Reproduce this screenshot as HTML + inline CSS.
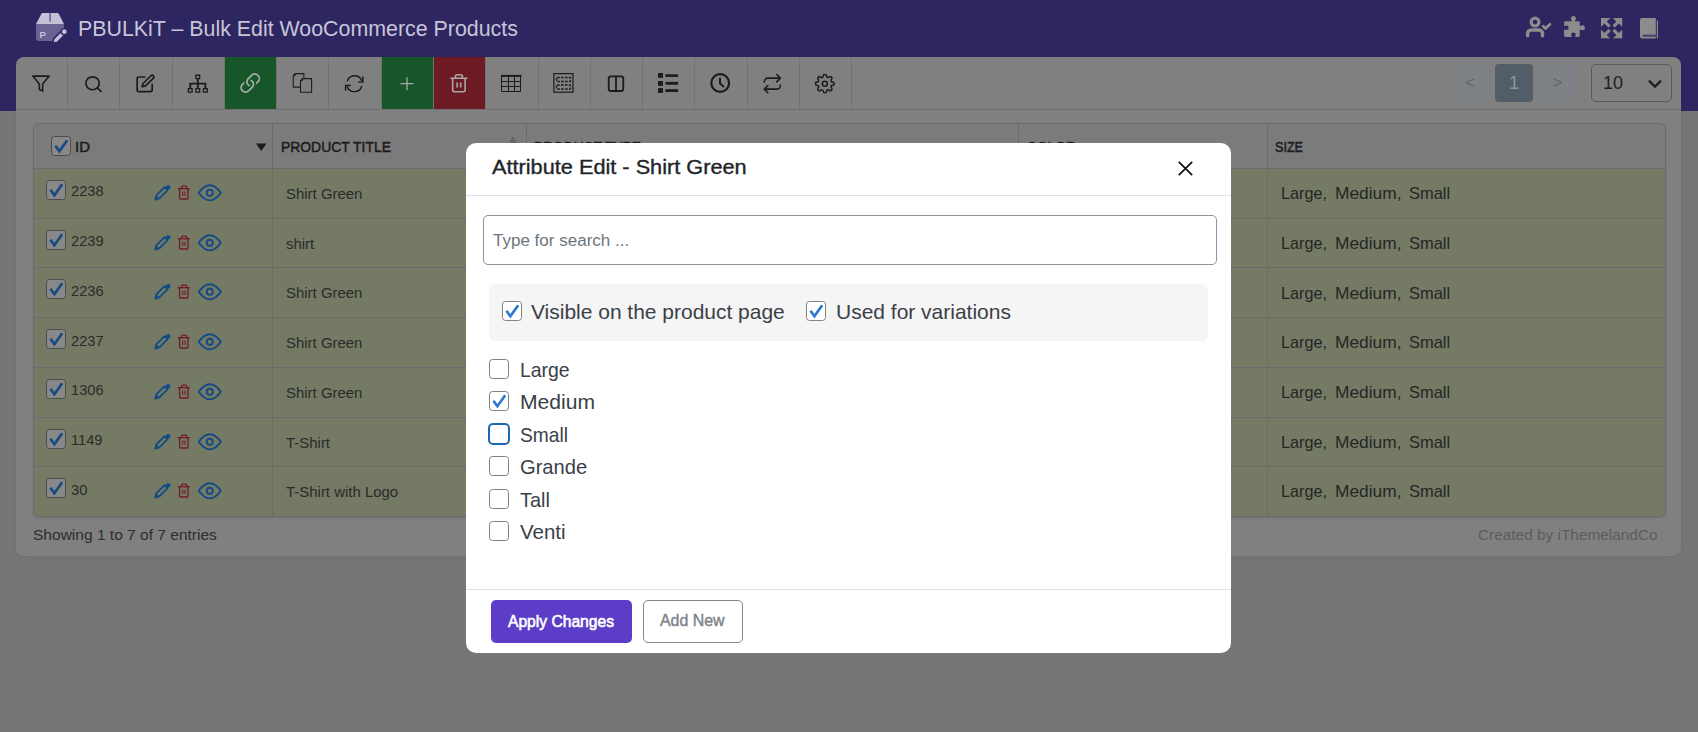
<!DOCTYPE html><html><head><meta charset="utf-8"><style>
*{box-sizing:border-box;margin:0;padding:0}
html,body{width:1698px;height:732px;overflow:hidden}
body{background:#767676;font-family:"Liberation Sans",sans-serif;position:relative}
div,svg,span{position:absolute}
.t{white-space:nowrap}
</style></head><body>
<div style="left:0;top:0;width:1698px;height:110.7px;background:#2d2660"></div>
<svg style="left:0;top:0" width="100" height="60" viewBox="0 0 100 60">
<path d="M36 24 H64 V30.5 L54.5 41 H39 a3 3 0 0 1 -3 -3 Z" fill="#6a6394"/>
<path d="M42.5 12.9 H57.7 a1 1 0 0 1 0.9 0.5 L64 24.1 H36 L41.6 13.4 a1 1 0 0 1 0.9 -0.5 Z" fill="#c4c0d8"/>
<rect x="49.3" y="12.9" width="1.6" height="8.8" fill="#6a6394"/>
<text x="39.6" y="38" font-family="Liberation Sans" font-weight="bold" font-size="9.6" fill="#c4c0d8">P</text>
<path d="M52.6 43.4 L53.8 38.6 L61 31.4 L64.6 35 L57.4 42.2 Z" fill="#c4c0d8" stroke="#2d2660" stroke-width="1.6" stroke-linejoin="round"/>
<circle cx="64.3" cy="31.7" r="3" fill="#c4c0d8" stroke="#2d2660" stroke-width="1.3"/>
</svg>
<div class="t" style="left:77.60px;top:17.73px;font-size:21.22px;line-height:21.22px;color:#c8c5d9;transform:scaleX(1.0072);transform-origin:0 0;">PBULKiT – Bulk Edit WooCommerce Products</div>
<svg style="left:1500px;top:0" width="198" height="60" viewBox="1500 0 198 60">
<circle cx="1535.05" cy="22.1" r="3.9" fill="none" stroke="#8c8c8c" stroke-width="3.2"/>
<path d="M1527.6 35.8 V33.6 a3.6 3.6 0 0 1 3.6 -3.6 H1538.9 a3.6 3.6 0 0 1 3.6 3.6 V35.8" fill="none" stroke="#8c8c8c" stroke-width="3.5" stroke-linecap="round"/>
<path d="M1543.2 26.3 L1545.5 28.6 L1549.9 24.2" fill="none" stroke="#8c8c8c" stroke-width="2.8" stroke-linecap="round" stroke-linejoin="round"/>
<rect x="1564.1" y="21.3" width="15.7" height="15.6" rx="1.3" fill="#8c8c8c"/>
<rect x="1571.9" y="19" width="3" height="3" fill="#8c8c8c"/>
<circle cx="1573.4" cy="18.6" r="2.5" fill="#8c8c8c"/>
<rect x="1579" y="26.2" width="3" height="3" fill="#8c8c8c"/>
<circle cx="1582.4" cy="27.7" r="2.5" fill="#8c8c8c"/>
<circle cx="1566.3" cy="27.7" r="2.3" fill="#2d2660"/>
<rect x="1563.5" y="26.4" width="2.6" height="2.6" fill="#2d2660"/>
<circle cx="1573.4" cy="34.8" r="2.3" fill="#2d2660"/>
<rect x="1572.1" y="35" width="2.6" height="2.6" fill="#2d2660"/>
<rect x="1601" y="18" width="21.2" height="20.3" fill="#8c8c8c"/>
<path d="M1611.6 16.8 L1616.4 21.6 L1611.6 26.4 L1606.8 21.6 Z M1611.6 30.2 L1616.4 35 L1611.6 39.8 L1606.8 35 Z M1599.6 28.2 L1604.4 23.4 L1609.2 28.2 L1604.4 33 Z M1614 28.2 L1618.8 23.4 L1623.6 28.2 L1618.8 33 Z M1611.6 24.4 L1615.4 28.2 L1611.6 32 L1607.8 28.2 Z" fill="#2d2660"/>
<path d="M1642 18 H1655.8 V38.4 H1642.5 a2.5 2.5 0 0 1 -2.5 -2.5 V20 a2 2 0 0 1 2 -2 Z" fill="#8c8c8c"/>
<rect x="1656.8" y="20.5" width="1.2" height="17.9" fill="#8c8c8c"/>
<path d="M1642.6 35.9 H1655.8" stroke="#2d2660" stroke-width="1.3"/>
<path d="M1642.6 34.3 H1655.8" stroke="#6f6a86" stroke-width="1"/>
</svg>
<div style="left:16px;top:57px;width:1665px;height:499px;background:#808080;border-radius:8px;box-shadow:0 1px 5px rgba(0,0,0,0.07)"></div>
<div style="left:16px;top:109px;width:1665px;height:1px;background:#6f6f6f"></div>
<div style="left:67.16px;top:57px;width:1px;height:52px;background:#737373"></div>
<div style="left:119.42px;top:57px;width:1px;height:52px;background:#737373"></div>
<div style="left:171.68px;top:57px;width:1px;height:52px;background:#737373"></div>
<div style="left:223.94px;top:57px;width:1px;height:52px;background:#737373"></div>
<div style="left:224.84px;top:57px;width:51.36px;height:52px;background:#165628"></div>
<div style="left:276.20px;top:57px;width:1px;height:52px;background:#737373"></div>
<div style="left:328.46px;top:57px;width:1px;height:52px;background:#737373"></div>
<div style="left:380.72px;top:57px;width:1px;height:52px;background:#737373"></div>
<div style="left:381.62px;top:57px;width:51.36px;height:52px;background:#165628"></div>
<div style="left:432.98px;top:57px;width:1px;height:52px;background:#737373"></div>
<div style="left:433.88px;top:57px;width:51.36px;height:52px;background:#6e1a24"></div>
<div style="left:485.24px;top:57px;width:1px;height:52px;background:#737373"></div>
<div style="left:537.50px;top:57px;width:1px;height:52px;background:#737373"></div>
<div style="left:589.76px;top:57px;width:1px;height:52px;background:#737373"></div>
<div style="left:642.02px;top:57px;width:1px;height:52px;background:#737373"></div>
<div style="left:694.28px;top:57px;width:1px;height:52px;background:#737373"></div>
<div style="left:746.54px;top:57px;width:1px;height:52px;background:#737373"></div>
<div style="left:798.80px;top:57px;width:1px;height:52px;background:#737373"></div>
<div style="left:851.06px;top:57px;width:1px;height:52px;background:#737373"></div>
<svg style="left:0;top:0" width="900" height="110" viewBox="0 0 900 110"><g transform="translate(31.160 73.600) scale(0.8200 0.8333)"><polygon points="22 3 2 3 10 12.46 10 19 14 21 14 12.46 22 3" fill="none" stroke="#1b1b1b" stroke-width="1.6" vector-effect="non-scaling-stroke" stroke-linejoin='round'/></g><g transform="translate(83.333 74.433) scale(0.8389 0.8056)"><circle cx="11" cy="11" r="8" fill="none" stroke="#1b1b1b" stroke-width="1.7" vector-effect="non-scaling-stroke" /><path d="M21 21 L16.65 16.65" fill="none" stroke="#1b1b1b" stroke-width="1.7" vector-effect="non-scaling-stroke" stroke-linecap='round'/></g><g transform="translate(135.480 73.718) scale(0.8350 0.8151)"><path d="M11 4H4a2 2 0 0 0-2 2v14a2 2 0 0 0 2 2h14a2 2 0 0 0 2-2v-7" fill="none" stroke="#1b1b1b" stroke-width="1.7" vector-effect="non-scaling-stroke" stroke-linecap='round'/><path d="M18.5 2.5a2.121 2.121 0 0 1 3 3L12 15l-4 1 1-4 9.5-9.5z" fill="none" stroke="#1b1b1b" stroke-width="1.7" vector-effect="non-scaling-stroke" stroke-linejoin='round'/></g><g transform="translate(186.460 73.570) scale(0.9450 0.8400)"><rect x="10" y="2" width="4" height="4" fill="none" stroke="#1b1b1b" stroke-width="1.3" vector-effect="non-scaling-stroke" /><rect x="2" y="18" width="4" height="4" fill="none" stroke="#1b1b1b" stroke-width="1.3" vector-effect="non-scaling-stroke" /><rect x="10" y="18" width="4" height="4" fill="none" stroke="#1b1b1b" stroke-width="1.3" vector-effect="non-scaling-stroke" /><rect x="18" y="18" width="4" height="4" fill="none" stroke="#1b1b1b" stroke-width="1.3" vector-effect="non-scaling-stroke" /><path d="M12 6 V18 M4 18 V12 H20 V18" fill="none" stroke="#1b1b1b" stroke-width="1.9" vector-effect="non-scaling-stroke" /></g><g transform="translate(235.760 69.604) scale(1.8051 1.7870)"><path fill="#a8a8a8" d="M4.715 6.542 3.343 7.914a3 3 0 1 0 4.243 4.243l1.828-1.829A3 3 0 0 0 8.586 5.5L8 6.086a1 1 0 0 0-.154.199 2 2 0 0 1 .861 3.337L6.88 11.45a2 2 0 1 1-2.83-2.83l.793-.792a4 4 0 0 1-.128-1.287z"/><path fill="#a8a8a8" d="M6.586 4.672A3 3 0 0 0 7.414 9.5l.775-.776a2 2 0 0 1-.896-3.346L9.12 3.55a2 2 0 1 1 2.83 2.83l-.793.792c.112.42.155.855.128 1.287l1.372-1.372a3 3 0 1 0-4.243-4.243z"/></g><path d="M295.2 73.6 H303.9 V78.6 M295.2 73.6 L293.2 75.6 V87.1 H300.5" fill="none" stroke="#1b1b1b" stroke-width="1.05"/><path d="M293.2 75.6 H295.2 V73.6" fill="#1b1b1b" stroke="#1b1b1b" stroke-width="0.9"/><path d="M302.5 78.6 H311.6 V92.2 H300.5 V80.6 Z" fill="none" stroke="#1b1b1b" stroke-width="1.05"/><path d="M300.5 80.6 H302.5 V78.6" fill="#1b1b1b" stroke="#1b1b1b" stroke-width="0.9"/><path d="M347.2 81.4 A7.7 7.7 0 0 1 361.9 80.9" fill="none" stroke="#1b1b1b" stroke-width="1.45"/><path d="M362.9 76.2 V82.1 H358" fill="none" stroke="#1b1b1b" stroke-width="1.45"/><path d="M361.8 86 A7.7 7.7 0 0 1 347.1 86.4" fill="none" stroke="#1b1b1b" stroke-width="1.45"/><path d="M350.8 85.4 H345.6 V90.8" fill="none" stroke="#1b1b1b" stroke-width="1.45"/><g transform="translate(395.943 72.507) scale(0.9214 0.9286)"><path d="M12 5 V19 M5 12 H19" fill="none" stroke="#a8a8a8" stroke-width="1.3" vector-effect="non-scaling-stroke" /></g><g transform="translate(448.233 73.100) scale(0.8889 0.8500)"><path d="M3 6h18" fill="none" stroke="#a8a8a8" stroke-width="1.6" vector-effect="non-scaling-stroke" stroke-linecap='round'/><path d="M19 6v14c0 1-1 2-2 2H7c-1 0-2-1-2-2V6" fill="none" stroke="#a8a8a8" stroke-width="1.6" vector-effect="non-scaling-stroke" /><path d="M8 6V4c0-1 1-2 2-2h4c1 0 2 1 2 2v2" fill="none" stroke="#a8a8a8" stroke-width="1.6" vector-effect="non-scaling-stroke" /><path d="M10 11v6 M14 11v6" fill="none" stroke="#a8a8a8" stroke-width="1.6" vector-effect="non-scaling-stroke" /></g><path d="M501.5 75 V91.5 H520.5 V75 M508.5 76.5 V91.5 M514.5 76.5 V91.5 M501.5 81.5 H520.5 M501.5 86.5 H520.5" fill="none" stroke="#1b1b1b" stroke-width="1"/><rect x="501" y="74.9" width="20.5" height="2" fill="#1b1b1b"/><rect x="553.9" y="73.6" width="19.1" height="18.6" fill="none" stroke="#1b1b1b" stroke-width="1.2"/><rect x="556.5" y="77.5" width="14" height="4" rx="0.6" fill="none" stroke="#1b1b1b" stroke-width="1.3" stroke-dasharray="2.6 1.3"/><rect x="556.5" y="85" width="14" height="4" rx="0.6" fill="none" stroke="#1b1b1b" stroke-width="1.3" stroke-dasharray="2.6 1.3"/><g transform="translate(608.700 76.400) scale(1.0000 1.0000)"><rect x="0" y="0" width="14.6" height="14.6" rx="2.2" fill="none" stroke="#1b1b1b" stroke-width="1.8" vector-effect="non-scaling-stroke" /><path d="M7.3 0 V14.6" fill="none" stroke="#1b1b1b" stroke-width="1.8" vector-effect="non-scaling-stroke" /></g><rect x="658" y="73" width="5" height="4.8" fill="#1b1b1b"/><rect x="658" y="81" width="5" height="4.9" fill="#1b1b1b"/><rect x="658" y="88.1" width="5" height="4.8" fill="#1b1b1b"/><rect x="665.4" y="74.3" width="12.7" height="2.6" fill="#1b1b1b"/><rect x="665.4" y="81.9" width="12.7" height="2.8" fill="#1b1b1b"/><rect x="665.4" y="89.2" width="12.7" height="2.8" fill="#1b1b1b"/><circle cx="720.2" cy="83" r="8.9" fill="none" stroke="#1b1b1b" stroke-width="2.2"/><path d="M720 77.8 V83.4 L724 87" fill="none" stroke="#1b1b1b" stroke-width="2"/><g transform="translate(761.633 72.670) scale(0.8889 0.9150)"><path d="m17 2 4 4-4 4" fill="none" stroke="#1b1b1b" stroke-width="1.6" vector-effect="non-scaling-stroke" stroke-linecap='round' stroke-linejoin='round'/><path d="M3 11v-1a4 4 0 0 1 4-4h14" fill="none" stroke="#1b1b1b" stroke-width="1.6" vector-effect="non-scaling-stroke" /><path d="m7 22-4-4 4-4" fill="none" stroke="#1b1b1b" stroke-width="1.6" vector-effect="non-scaling-stroke" stroke-linecap='round' stroke-linejoin='round'/><path d="M21 13v1a4 4 0 0 1-4 4H3" fill="none" stroke="#1b1b1b" stroke-width="1.6" vector-effect="non-scaling-stroke" /></g><g transform="translate(814.595 73.614) scale(0.8545 0.8364)"><circle cx="12" cy="12" r="3" fill="none" stroke="#1b1b1b" stroke-width="1.5" vector-effect="non-scaling-stroke" /><path d="M19.4 15a1.65 1.65 0 0 0 .33 1.82l.06.06a2 2 0 0 1-2.83 2.83l-.06-.06a1.65 1.65 0 0 0-1.82-.33 1.65 1.65 0 0 0-1 1.51V21a2 2 0 0 1-4 0v-.09A1.65 1.65 0 0 0 9 19.4a1.65 1.65 0 0 0-1.82.33l-.06.06a2 2 0 0 1-2.83-2.830l.06-.06a1.65 1.65 0 0 0 .33-1.82 1.65 1.65 0 0 0-1.51-1H3a2 2 0 0 1 0-4h.09A1.65 1.65 0 0 0 4.6 9a1.65 1.65 0 0 0-.33-1.82l-.06-.06a2 2 0 0 1 2.83-2.83l.06.06a1.65 1.65 0 0 0 1.82.33H9a1.65 1.65 0 0 0 1-1.51V3a2 2 0 0 1 4 0v.09a1.65 1.65 0 0 0 1 1.51 1.65 1.65 0 0 0 1.82-.33l.06-.06a2 2 0 0 1 2.83 2.83l-.06.06a1.65 1.65 0 0 0-.33 1.82V9a1.65 1.65 0 0 0 1.51 1H21a2 2 0 0 1 0 4h-.09a1.65 1.65 0 0 0-1.51 1z" fill="none" stroke="#1b1b1b" stroke-width="1.5" vector-effect="non-scaling-stroke" /></g></svg>
<div style="left:1451px;top:64px;width:38px;height:38px;background:#7e8185;border-radius:4px"></div>
<div class="t" style="left:1451px;top:72px;width:38px;text-align:center;font-size:17px;line-height:22px;color:#5d6670">&lt;</div>
<div style="left:1495px;top:64px;width:38px;height:38px;background:#535d68;border-radius:4px"></div>
<div class="t" style="left:1495px;top:72px;width:38px;text-align:center;font-size:18px;line-height:22px;color:#8c96a0">1</div>
<div style="left:1539px;top:64px;width:37px;height:38px;background:#7e8185;border-radius:4px"></div>
<div class="t" style="left:1539px;top:72px;width:37px;text-align:center;font-size:17px;line-height:22px;color:#5d6670">&gt;</div>
<div style="left:1591px;top:64px;width:81px;height:38px;border:1px solid #5a5a5a;border-radius:5px"></div>
<div class="t" style="left:1603px;top:72px;font-size:18px;line-height:22px;color:#1e1e1e">10</div>
<svg style="left:1647px;top:78px" width="16" height="11" viewBox="0 0 16 11"><path d="M1.9 2.6 L7.95 8.6 L14 2.6" fill="none" stroke="#1e1e1e" stroke-width="2.3"/></svg>
<div style="left:33px;top:123px;width:1633px;height:394px;background:#747a64;border:1px solid #6b6b6b;border-radius:6px;overflow:hidden;box-shadow:0 1px 2px rgba(0,0,0,0.12)"><div style="left:0;top:0;width:100%;height:45px;background:#7b7b7b;border-bottom:1px solid #6b6b6b"></div></div>
<div style="left:34px;top:217.70px;width:1631px;height:1px;background:#6b6b6b"></div>
<div style="left:34px;top:267.40px;width:1631px;height:1px;background:#6b6b6b"></div>
<div style="left:34px;top:317.10px;width:1631px;height:1px;background:#6b6b6b"></div>
<div style="left:34px;top:366.80px;width:1631px;height:1px;background:#6b6b6b"></div>
<div style="left:34px;top:416.50px;width:1631px;height:1px;background:#6b6b6b"></div>
<div style="left:34px;top:466.20px;width:1631px;height:1px;background:#6b6b6b"></div>
<div style="left:272px;top:124px;width:1px;height:392px;background:#6b6b6b"></div>
<div style="left:526px;top:124px;width:1px;height:392px;background:#6b6b6b"></div>
<div style="left:1018px;top:124px;width:1px;height:392px;background:#6b6b6b"></div>
<div style="left:1267px;top:124px;width:1px;height:392px;background:#6b6b6b"></div>
<div style="left:51px;top:136px;width:20px;height:20px;border:1px solid #4c4c4c;border-radius:3.5px;background:#888889"></div><svg style="left:51px;top:136px" width="20" height="20" viewBox="0 0 20 20"><path d="M4.4 9.8 L8.4 15.2 L16.2 4.2" fill="none" stroke="#184a82" stroke-width="2.7" stroke-linecap="butt" stroke-linejoin="miter"/></svg>
<div class="t" style="left:74.60px;top:138.87px;font-size:15.26px;line-height:15.26px;color:#1b1b1b;transform:scaleX(0.9800);transform-origin:0 0;-webkit-text-stroke:0.5px #1b1b1b">ID</div>
<svg style="left:256px;top:143px" width="11" height="9" viewBox="0 0 11 9"><path d="M0 0.5 H10.5 L5.25 8 Z" fill="#1b1b1b"/></svg>
<div class="t" style="left:281.40px;top:138.87px;font-size:15.26px;line-height:15.26px;color:#1b1b1b;transform:scaleX(0.9113);transform-origin:0 0;-webkit-text-stroke:0.5px #1b1b1b">PRODUCT TITLE</div>
<svg style="left:508px;top:135px" width="10" height="9" viewBox="0 0 10 9"><path d="M0.6 8.5 H9 L4.8 1 Z" fill="#666"/></svg>
<div class="t" style="left:534.00px;top:138.87px;font-size:15.26px;line-height:15.26px;color:#1b1b1b;transform:scaleX(0.9000);transform-origin:0 0;-webkit-text-stroke:0.5px #1b1b1b">PRODUCT TYPE</div>
<div class="t" style="left:1026.70px;top:138.87px;font-size:15.26px;line-height:15.26px;color:#1b1b1b;transform:scaleX(0.9000);transform-origin:0 0;-webkit-text-stroke:0.5px #1b1b1b">COLOR</div>
<div class="t" style="left:1275.40px;top:138.87px;font-size:15.26px;line-height:15.26px;color:#1b1b1b;transform:scaleX(0.8253);transform-origin:0 0;-webkit-text-stroke:0.5px #1b1b1b">SIZE</div>
<div style="left:46px;top:180.0px;width:20px;height:20px;border:1px solid #4c4c4c;border-radius:3.5px;background:#888889"></div><svg style="left:46px;top:180.0px" width="20" height="20" viewBox="0 0 20 20"><path d="M4.4 9.8 L8.4 15.2 L16.2 4.2" fill="none" stroke="#184a82" stroke-width="2.7" stroke-linecap="butt" stroke-linejoin="miter"/></svg>
<div class="t" style="left:70.90px;top:183.45px;font-size:15.41px;line-height:15.41px;color:#2b2b2b;transform:scaleX(0.9500);transform-origin:0 0;">2238</div>
<svg style="left:150px;top:180.0px" width="80" height="30" viewBox="150 180.0 80 30"><path d="M155.3 199.6 L156.6 195.2 L164.6 187.2 L167.6 190.2 L159.6 198.2 Z" fill="none" stroke="#134b86" stroke-width="1.9" stroke-linejoin="round"/><path d="M155.3 199.6 L156.3 196.0 L158.9 198.6 Z" fill="#134b86" stroke="#134b86" stroke-width="1"/><circle cx="168.2" cy="187.2" r="2.2" fill="#134b86"/><path d="M177.8 188.7 H189.8" stroke="#74182a" stroke-width="1.3"/><path d="M181.6 188.7 V187.2 a1 1 0 0 1 1 -1 H185.6 a1 1 0 0 1 1 1 V188.7" fill="none" stroke="#74182a" stroke-width="1.3"/><path d="M179.6 188.7 V198.0 a1 1 0 0 0 1 1 H187 a1 1 0 0 0 1 -1 V188.7" fill="none" stroke="#74182a" stroke-width="1.3"/><path d="M182.7 191.6 V196.0 M185 191.6 V196.0" stroke="#74182a" stroke-width="1.1"/><path d="M198.7 192.8 Q209.8 177.6 220.9 192.8 Q209.8 208.0 198.7 192.8 Z" fill="none" stroke="#134b86" stroke-width="1.9" stroke-linejoin="round"/><circle cx="209.8" cy="192.8" r="3.05" fill="none" stroke="#134b86" stroke-width="1.9"/></svg>
<div class="t" style="left:285.70px;top:186.07px;font-size:15.26px;line-height:15.26px;color:#2b2b2b;transform:scaleX(0.9800);transform-origin:0 0;">Shirt Green</div>
<div class="t" style="left:1281.00px;top:185.20px;font-size:17.01px;line-height:17.01px;color:#262626;transform:scaleX(0.9521);transform-origin:0 0;">Large,</div>
<div class="t" style="left:1334.60px;top:185.20px;font-size:17.01px;line-height:17.01px;color:#262626;transform:scaleX(1.0197);transform-origin:0 0;">Medium,</div>
<div class="t" style="left:1408.80px;top:185.20px;font-size:17.01px;line-height:17.01px;color:#262626;transform:scaleX(0.9687);transform-origin:0 0;">Small</div>
<div style="left:46px;top:229.7px;width:20px;height:20px;border:1px solid #4c4c4c;border-radius:3.5px;background:#888889"></div><svg style="left:46px;top:229.7px" width="20" height="20" viewBox="0 0 20 20"><path d="M4.4 9.8 L8.4 15.2 L16.2 4.2" fill="none" stroke="#184a82" stroke-width="2.7" stroke-linecap="butt" stroke-linejoin="miter"/></svg>
<div class="t" style="left:70.90px;top:233.15px;font-size:15.41px;line-height:15.41px;color:#2b2b2b;transform:scaleX(0.9500);transform-origin:0 0;">2239</div>
<svg style="left:150px;top:229.7px" width="80" height="30" viewBox="150 229.7 80 30"><path d="M155.3 249.29999999999998 L156.6 244.89999999999998 L164.6 236.89999999999998 L167.6 239.89999999999998 L159.6 247.89999999999998 Z" fill="none" stroke="#134b86" stroke-width="1.9" stroke-linejoin="round"/><path d="M155.3 249.29999999999998 L156.3 245.7 L158.9 248.29999999999998 Z" fill="#134b86" stroke="#134b86" stroke-width="1"/><circle cx="168.2" cy="236.89999999999998" r="2.2" fill="#134b86"/><path d="M177.8 238.39999999999998 H189.8" stroke="#74182a" stroke-width="1.3"/><path d="M181.6 238.39999999999998 V236.89999999999998 a1 1 0 0 1 1 -1 H185.6 a1 1 0 0 1 1 1 V238.39999999999998" fill="none" stroke="#74182a" stroke-width="1.3"/><path d="M179.6 238.39999999999998 V247.7 a1 1 0 0 0 1 1 H187 a1 1 0 0 0 1 -1 V238.39999999999998" fill="none" stroke="#74182a" stroke-width="1.3"/><path d="M182.7 241.29999999999998 V245.7 M185 241.29999999999998 V245.7" stroke="#74182a" stroke-width="1.1"/><path d="M198.7 242.5 Q209.8 227.29999999999998 220.9 242.5 Q209.8 257.7 198.7 242.5 Z" fill="none" stroke="#134b86" stroke-width="1.9" stroke-linejoin="round"/><circle cx="209.8" cy="242.5" r="3.05" fill="none" stroke="#134b86" stroke-width="1.9"/></svg>
<div class="t" style="left:285.70px;top:235.77px;font-size:15.26px;line-height:15.26px;color:#2b2b2b;transform:scaleX(0.9800);transform-origin:0 0;">shirt</div>
<div class="t" style="left:1281.00px;top:234.90px;font-size:17.01px;line-height:17.01px;color:#262626;transform:scaleX(0.9521);transform-origin:0 0;">Large,</div>
<div class="t" style="left:1334.60px;top:234.90px;font-size:17.01px;line-height:17.01px;color:#262626;transform:scaleX(1.0197);transform-origin:0 0;">Medium,</div>
<div class="t" style="left:1408.80px;top:234.90px;font-size:17.01px;line-height:17.01px;color:#262626;transform:scaleX(0.9687);transform-origin:0 0;">Small</div>
<div style="left:46px;top:279.4px;width:20px;height:20px;border:1px solid #4c4c4c;border-radius:3.5px;background:#888889"></div><svg style="left:46px;top:279.4px" width="20" height="20" viewBox="0 0 20 20"><path d="M4.4 9.8 L8.4 15.2 L16.2 4.2" fill="none" stroke="#184a82" stroke-width="2.7" stroke-linecap="butt" stroke-linejoin="miter"/></svg>
<div class="t" style="left:70.90px;top:282.85px;font-size:15.41px;line-height:15.41px;color:#2b2b2b;transform:scaleX(0.9500);transform-origin:0 0;">2236</div>
<svg style="left:150px;top:279.4px" width="80" height="30" viewBox="150 279.4 80 30"><path d="M155.3 299.0 L156.6 294.59999999999997 L164.6 286.59999999999997 L167.6 289.59999999999997 L159.6 297.59999999999997 Z" fill="none" stroke="#134b86" stroke-width="1.9" stroke-linejoin="round"/><path d="M155.3 299.0 L156.3 295.4 L158.9 298.0 Z" fill="#134b86" stroke="#134b86" stroke-width="1"/><circle cx="168.2" cy="286.59999999999997" r="2.2" fill="#134b86"/><path d="M177.8 288.09999999999997 H189.8" stroke="#74182a" stroke-width="1.3"/><path d="M181.6 288.09999999999997 V286.59999999999997 a1 1 0 0 1 1 -1 H185.6 a1 1 0 0 1 1 1 V288.09999999999997" fill="none" stroke="#74182a" stroke-width="1.3"/><path d="M179.6 288.09999999999997 V297.4 a1 1 0 0 0 1 1 H187 a1 1 0 0 0 1 -1 V288.09999999999997" fill="none" stroke="#74182a" stroke-width="1.3"/><path d="M182.7 291.0 V295.4 M185 291.0 V295.4" stroke="#74182a" stroke-width="1.1"/><path d="M198.7 292.2 Q209.8 277.0 220.9 292.2 Q209.8 307.4 198.7 292.2 Z" fill="none" stroke="#134b86" stroke-width="1.9" stroke-linejoin="round"/><circle cx="209.8" cy="292.2" r="3.05" fill="none" stroke="#134b86" stroke-width="1.9"/></svg>
<div class="t" style="left:285.70px;top:285.47px;font-size:15.26px;line-height:15.26px;color:#2b2b2b;transform:scaleX(0.9800);transform-origin:0 0;">Shirt Green</div>
<div class="t" style="left:1281.00px;top:284.60px;font-size:17.01px;line-height:17.01px;color:#262626;transform:scaleX(0.9521);transform-origin:0 0;">Large,</div>
<div class="t" style="left:1334.60px;top:284.60px;font-size:17.01px;line-height:17.01px;color:#262626;transform:scaleX(1.0197);transform-origin:0 0;">Medium,</div>
<div class="t" style="left:1408.80px;top:284.60px;font-size:17.01px;line-height:17.01px;color:#262626;transform:scaleX(0.9687);transform-origin:0 0;">Small</div>
<div style="left:46px;top:329.1px;width:20px;height:20px;border:1px solid #4c4c4c;border-radius:3.5px;background:#888889"></div><svg style="left:46px;top:329.1px" width="20" height="20" viewBox="0 0 20 20"><path d="M4.4 9.8 L8.4 15.2 L16.2 4.2" fill="none" stroke="#184a82" stroke-width="2.7" stroke-linecap="butt" stroke-linejoin="miter"/></svg>
<div class="t" style="left:70.90px;top:332.55px;font-size:15.41px;line-height:15.41px;color:#2b2b2b;transform:scaleX(0.9500);transform-origin:0 0;">2237</div>
<svg style="left:150px;top:329.1px" width="80" height="30" viewBox="150 329.1 80 30"><path d="M155.3 348.70000000000005 L156.6 344.3 L164.6 336.3 L167.6 339.3 L159.6 347.3 Z" fill="none" stroke="#134b86" stroke-width="1.9" stroke-linejoin="round"/><path d="M155.3 348.70000000000005 L156.3 345.1 L158.9 347.70000000000005 Z" fill="#134b86" stroke="#134b86" stroke-width="1"/><circle cx="168.2" cy="336.3" r="2.2" fill="#134b86"/><path d="M177.8 337.8 H189.8" stroke="#74182a" stroke-width="1.3"/><path d="M181.6 337.8 V336.3 a1 1 0 0 1 1 -1 H185.6 a1 1 0 0 1 1 1 V337.8" fill="none" stroke="#74182a" stroke-width="1.3"/><path d="M179.6 337.8 V347.1 a1 1 0 0 0 1 1 H187 a1 1 0 0 0 1 -1 V337.8" fill="none" stroke="#74182a" stroke-width="1.3"/><path d="M182.7 340.70000000000005 V345.1 M185 340.70000000000005 V345.1" stroke="#74182a" stroke-width="1.1"/><path d="M198.7 341.90000000000003 Q209.8 326.70000000000005 220.9 341.90000000000003 Q209.8 357.1 198.7 341.90000000000003 Z" fill="none" stroke="#134b86" stroke-width="1.9" stroke-linejoin="round"/><circle cx="209.8" cy="341.90000000000003" r="3.05" fill="none" stroke="#134b86" stroke-width="1.9"/></svg>
<div class="t" style="left:285.70px;top:335.17px;font-size:15.26px;line-height:15.26px;color:#2b2b2b;transform:scaleX(0.9800);transform-origin:0 0;">Shirt Green</div>
<div class="t" style="left:1281.00px;top:334.30px;font-size:17.01px;line-height:17.01px;color:#262626;transform:scaleX(0.9521);transform-origin:0 0;">Large,</div>
<div class="t" style="left:1334.60px;top:334.30px;font-size:17.01px;line-height:17.01px;color:#262626;transform:scaleX(1.0197);transform-origin:0 0;">Medium,</div>
<div class="t" style="left:1408.80px;top:334.30px;font-size:17.01px;line-height:17.01px;color:#262626;transform:scaleX(0.9687);transform-origin:0 0;">Small</div>
<div style="left:46px;top:378.8px;width:20px;height:20px;border:1px solid #4c4c4c;border-radius:3.5px;background:#888889"></div><svg style="left:46px;top:378.8px" width="20" height="20" viewBox="0 0 20 20"><path d="M4.4 9.8 L8.4 15.2 L16.2 4.2" fill="none" stroke="#184a82" stroke-width="2.7" stroke-linecap="butt" stroke-linejoin="miter"/></svg>
<div class="t" style="left:70.90px;top:382.25px;font-size:15.41px;line-height:15.41px;color:#2b2b2b;transform:scaleX(0.9500);transform-origin:0 0;">1306</div>
<svg style="left:150px;top:378.8px" width="80" height="30" viewBox="150 378.8 80 30"><path d="M155.3 398.4 L156.6 394.0 L164.6 386.0 L167.6 389.0 L159.6 397.0 Z" fill="none" stroke="#134b86" stroke-width="1.9" stroke-linejoin="round"/><path d="M155.3 398.4 L156.3 394.8 L158.9 397.4 Z" fill="#134b86" stroke="#134b86" stroke-width="1"/><circle cx="168.2" cy="386.0" r="2.2" fill="#134b86"/><path d="M177.8 387.5 H189.8" stroke="#74182a" stroke-width="1.3"/><path d="M181.6 387.5 V386.0 a1 1 0 0 1 1 -1 H185.6 a1 1 0 0 1 1 1 V387.5" fill="none" stroke="#74182a" stroke-width="1.3"/><path d="M179.6 387.5 V396.8 a1 1 0 0 0 1 1 H187 a1 1 0 0 0 1 -1 V387.5" fill="none" stroke="#74182a" stroke-width="1.3"/><path d="M182.7 390.4 V394.8 M185 390.4 V394.8" stroke="#74182a" stroke-width="1.1"/><path d="M198.7 391.6 Q209.8 376.4 220.9 391.6 Q209.8 406.8 198.7 391.6 Z" fill="none" stroke="#134b86" stroke-width="1.9" stroke-linejoin="round"/><circle cx="209.8" cy="391.6" r="3.05" fill="none" stroke="#134b86" stroke-width="1.9"/></svg>
<div class="t" style="left:285.70px;top:384.87px;font-size:15.26px;line-height:15.26px;color:#2b2b2b;transform:scaleX(0.9800);transform-origin:0 0;">Shirt Green</div>
<div class="t" style="left:1281.00px;top:384.00px;font-size:17.01px;line-height:17.01px;color:#262626;transform:scaleX(0.9521);transform-origin:0 0;">Large,</div>
<div class="t" style="left:1334.60px;top:384.00px;font-size:17.01px;line-height:17.01px;color:#262626;transform:scaleX(1.0197);transform-origin:0 0;">Medium,</div>
<div class="t" style="left:1408.80px;top:384.00px;font-size:17.01px;line-height:17.01px;color:#262626;transform:scaleX(0.9687);transform-origin:0 0;">Small</div>
<div style="left:46px;top:428.5px;width:20px;height:20px;border:1px solid #4c4c4c;border-radius:3.5px;background:#888889"></div><svg style="left:46px;top:428.5px" width="20" height="20" viewBox="0 0 20 20"><path d="M4.4 9.8 L8.4 15.2 L16.2 4.2" fill="none" stroke="#184a82" stroke-width="2.7" stroke-linecap="butt" stroke-linejoin="miter"/></svg>
<div class="t" style="left:70.90px;top:431.95px;font-size:15.41px;line-height:15.41px;color:#2b2b2b;transform:scaleX(0.9500);transform-origin:0 0;">1149</div>
<svg style="left:150px;top:428.5px" width="80" height="30" viewBox="150 428.5 80 30"><path d="M155.3 448.1 L156.6 443.7 L164.6 435.7 L167.6 438.7 L159.6 446.7 Z" fill="none" stroke="#134b86" stroke-width="1.9" stroke-linejoin="round"/><path d="M155.3 448.1 L156.3 444.5 L158.9 447.1 Z" fill="#134b86" stroke="#134b86" stroke-width="1"/><circle cx="168.2" cy="435.7" r="2.2" fill="#134b86"/><path d="M177.8 437.2 H189.8" stroke="#74182a" stroke-width="1.3"/><path d="M181.6 437.2 V435.7 a1 1 0 0 1 1 -1 H185.6 a1 1 0 0 1 1 1 V437.2" fill="none" stroke="#74182a" stroke-width="1.3"/><path d="M179.6 437.2 V446.5 a1 1 0 0 0 1 1 H187 a1 1 0 0 0 1 -1 V437.2" fill="none" stroke="#74182a" stroke-width="1.3"/><path d="M182.7 440.1 V444.5 M185 440.1 V444.5" stroke="#74182a" stroke-width="1.1"/><path d="M198.7 441.3 Q209.8 426.1 220.9 441.3 Q209.8 456.5 198.7 441.3 Z" fill="none" stroke="#134b86" stroke-width="1.9" stroke-linejoin="round"/><circle cx="209.8" cy="441.3" r="3.05" fill="none" stroke="#134b86" stroke-width="1.9"/></svg>
<div class="t" style="left:285.70px;top:434.57px;font-size:15.26px;line-height:15.26px;color:#2b2b2b;transform:scaleX(0.9800);transform-origin:0 0;">T-Shirt</div>
<div class="t" style="left:1281.00px;top:433.70px;font-size:17.01px;line-height:17.01px;color:#262626;transform:scaleX(0.9521);transform-origin:0 0;">Large,</div>
<div class="t" style="left:1334.60px;top:433.70px;font-size:17.01px;line-height:17.01px;color:#262626;transform:scaleX(1.0197);transform-origin:0 0;">Medium,</div>
<div class="t" style="left:1408.80px;top:433.70px;font-size:17.01px;line-height:17.01px;color:#262626;transform:scaleX(0.9687);transform-origin:0 0;">Small</div>
<div style="left:46px;top:478.20000000000005px;width:20px;height:20px;border:1px solid #4c4c4c;border-radius:3.5px;background:#888889"></div><svg style="left:46px;top:478.20000000000005px" width="20" height="20" viewBox="0 0 20 20"><path d="M4.4 9.8 L8.4 15.2 L16.2 4.2" fill="none" stroke="#184a82" stroke-width="2.7" stroke-linecap="butt" stroke-linejoin="miter"/></svg>
<div class="t" style="left:70.90px;top:481.65px;font-size:15.41px;line-height:15.41px;color:#2b2b2b;transform:scaleX(0.9500);transform-origin:0 0;">30</div>
<svg style="left:150px;top:478.20000000000005px" width="80" height="30" viewBox="150 478.20000000000005 80 30"><path d="M155.3 497.80000000000007 L156.6 493.40000000000003 L164.6 485.40000000000003 L167.6 488.40000000000003 L159.6 496.40000000000003 Z" fill="none" stroke="#134b86" stroke-width="1.9" stroke-linejoin="round"/><path d="M155.3 497.80000000000007 L156.3 494.20000000000005 L158.9 496.80000000000007 Z" fill="#134b86" stroke="#134b86" stroke-width="1"/><circle cx="168.2" cy="485.40000000000003" r="2.2" fill="#134b86"/><path d="M177.8 486.90000000000003 H189.8" stroke="#74182a" stroke-width="1.3"/><path d="M181.6 486.90000000000003 V485.40000000000003 a1 1 0 0 1 1 -1 H185.6 a1 1 0 0 1 1 1 V486.90000000000003" fill="none" stroke="#74182a" stroke-width="1.3"/><path d="M179.6 486.90000000000003 V496.20000000000005 a1 1 0 0 0 1 1 H187 a1 1 0 0 0 1 -1 V486.90000000000003" fill="none" stroke="#74182a" stroke-width="1.3"/><path d="M182.7 489.80000000000007 V494.20000000000005 M185 489.80000000000007 V494.20000000000005" stroke="#74182a" stroke-width="1.1"/><path d="M198.7 491.00000000000006 Q209.8 475.80000000000007 220.9 491.00000000000006 Q209.8 506.20000000000005 198.7 491.00000000000006 Z" fill="none" stroke="#134b86" stroke-width="1.9" stroke-linejoin="round"/><circle cx="209.8" cy="491.00000000000006" r="3.05" fill="none" stroke="#134b86" stroke-width="1.9"/></svg>
<div class="t" style="left:285.70px;top:484.27px;font-size:15.26px;line-height:15.26px;color:#2b2b2b;transform:scaleX(0.9800);transform-origin:0 0;">T-Shirt with Logo</div>
<div class="t" style="left:1281.00px;top:483.40px;font-size:17.01px;line-height:17.01px;color:#262626;transform:scaleX(0.9521);transform-origin:0 0;">Large,</div>
<div class="t" style="left:1334.60px;top:483.40px;font-size:17.01px;line-height:17.01px;color:#262626;transform:scaleX(1.0197);transform-origin:0 0;">Medium,</div>
<div class="t" style="left:1408.80px;top:483.40px;font-size:17.01px;line-height:17.01px;color:#262626;transform:scaleX(0.9687);transform-origin:0 0;">Small</div>
<div class="t" style="left:32.60px;top:526.75px;font-size:15.41px;line-height:15.41px;color:#2d2d2d;transform:scaleX(1.0080);transform-origin:0 0;">Showing 1 to 7 of 7 entries</div>
<div class="t" style="left:1477.50px;top:526.75px;font-size:15.41px;line-height:15.41px;color:#5c5c5c;transform:scaleX(0.9986);transform-origin:0 0;">Created by iThemelandCo</div>
<div style="left:466px;top:143px;width:765px;height:510px;background:#fff;border-radius:10px"></div>
<div style="left:466px;top:195px;width:765px;height:1px;background:#dee2e6"></div>
<div class="t" style="left:491.50px;top:158.06px;font-size:19.77px;line-height:19.77px;color:#212529;transform:scaleX(1.0987);transform-origin:0 0;-webkit-text-stroke:0.35px #212529">Attribute Edit - Shirt Green</div>
<svg style="left:1177px;top:160px" width="17" height="17" viewBox="0 0 17 17"><path d="M1.8 1.8 L15.2 15.2 M15.2 1.8 L1.8 15.2" stroke="#111" stroke-width="1.7"/></svg>
<div style="left:483px;top:215px;width:734px;height:50px;border:1px solid #8e949a;border-radius:5px"></div>
<div class="t" style="left:493.20px;top:231.55px;font-size:17.30px;line-height:17.30px;color:#6c757d;transform:scaleX(0.9847);transform-origin:0 0;">Type for search ...</div>
<div style="left:489px;top:284px;width:719px;height:57px;background:#f5f5f5;border-radius:6px"></div>
<div style="left:502px;top:301px;width:20px;height:20px;border:1px solid #7c8288;border-radius:3.5px;background:#fff"></div><svg style="left:502px;top:301px" width="20" height="20" viewBox="0 0 20 20"><path d="M4.4 9.8 L8.4 15.2 L16.2 4.2" fill="none" stroke="#2d7bd0" stroke-width="2.7" stroke-linecap="butt" stroke-linejoin="miter"/></svg>
<div class="t" style="left:531.00px;top:302.31px;font-size:20.06px;line-height:20.06px;color:#3a4047;transform:scaleX(1.0460);transform-origin:0 0;">Visible on the product page</div>
<div style="left:806px;top:301px;width:20px;height:20px;border:1px solid #7c8288;border-radius:3.5px;background:#fff"></div><svg style="left:806px;top:301px" width="20" height="20" viewBox="0 0 20 20"><path d="M4.4 9.8 L8.4 15.2 L16.2 4.2" fill="none" stroke="#2d7bd0" stroke-width="2.7" stroke-linecap="butt" stroke-linejoin="miter"/></svg>
<div class="t" style="left:835.80px;top:302.31px;font-size:20.06px;line-height:20.06px;color:#3a4047;transform:scaleX(1.0465);transform-origin:0 0;">Used for variations</div>
<div style="left:489px;top:359.0px;width:20px;height:20px;border:1px solid #7c8288;border-radius:3.5px;background:#fff"></div>
<div class="t" style="left:519.80px;top:360.11px;font-size:20.06px;line-height:20.06px;color:#3a4047;transform:scaleX(0.9686);transform-origin:0 0;">Large</div>
<div style="left:489px;top:391.4px;width:20px;height:20px;border:1px solid #7c8288;border-radius:3.5px;background:#fff"></div><svg style="left:489px;top:391.4px" width="20" height="20" viewBox="0 0 20 20"><path d="M4.4 9.8 L8.4 15.2 L16.2 4.2" fill="none" stroke="#2d7bd0" stroke-width="2.7" stroke-linecap="butt" stroke-linejoin="miter"/></svg>
<div class="t" style="left:519.80px;top:391.91px;font-size:20.06px;line-height:20.06px;color:#3a4047;transform:scaleX(1.0526);transform-origin:0 0;">Medium</div>
<div style="left:488px;top:422.8px;width:22px;height:22px;border:2.1px solid #1f69b0;border-radius:5px;background:#fff"></div>
<div class="t" style="left:519.80px;top:425.21px;font-size:20.06px;line-height:20.06px;color:#3a4047;transform:scaleX(0.9568);transform-origin:0 0;">Small</div>
<div style="left:489px;top:456.2px;width:20px;height:20px;border:1px solid #7c8288;border-radius:3.5px;background:#fff"></div>
<div class="t" style="left:519.80px;top:456.61px;font-size:20.06px;line-height:20.06px;color:#3a4047;transform:scaleX(1.0046);transform-origin:0 0;">Grande</div>
<div style="left:489px;top:488.6px;width:20px;height:20px;border:1px solid #7c8288;border-radius:3.5px;background:#fff"></div>
<div class="t" style="left:519.80px;top:489.71px;font-size:20.06px;line-height:20.06px;color:#3a4047;transform:scaleX(0.9931);transform-origin:0 0;">Tall</div>
<div style="left:489px;top:521.0px;width:20px;height:20px;border:1px solid #7c8288;border-radius:3.5px;background:#fff"></div>
<div class="t" style="left:519.80px;top:521.61px;font-size:20.06px;line-height:20.06px;color:#3a4047;transform:scaleX(1.0222);transform-origin:0 0;">Venti</div>
<div style="left:466px;top:589px;width:765px;height:1px;background:#dee2e6"></div>
<div style="left:491px;top:600px;width:141px;height:43px;background:#5b3dc8;border-radius:5px"></div>
<div class="t" style="left:507.70px;top:613.56px;font-size:15.99px;line-height:15.99px;color:#ffffff;transform:scaleX(0.9776);transform-origin:0 0;-webkit-text-stroke:0.6px #ffffff">Apply Changes</div>
<div style="left:643px;top:600px;width:100px;height:43px;border:1px solid #80868b;border-radius:5px"></div>
<div class="t" style="left:660.20px;top:613.16px;font-size:15.99px;line-height:15.99px;color:#80868c;transform:scaleX(0.9952);transform-origin:0 0;-webkit-text-stroke:0.45px #80868c">Add New</div>
</body></html>
